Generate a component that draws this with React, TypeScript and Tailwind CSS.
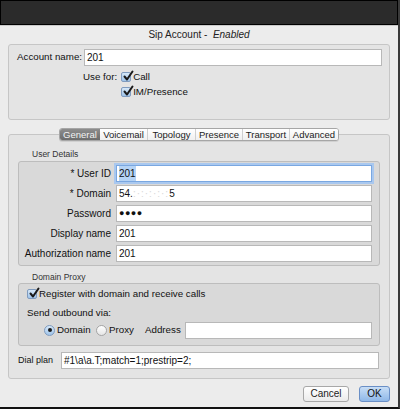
import React from "react";

const font = { fontFamily: '"Liberation Sans", Arial, sans-serif' };

function Check({ label }: { label: string }) {
  return (
    <div className="flex items-center gap-[2px]">
      <span className="relative w-[10px] h-[10px] rounded-[2px] border border-[#7f9bbf] bg-gradient-to-b from-[#d6e8f8] to-[#9fc4ea] shrink-0">
        <svg viewBox="0 0 12 12" className="absolute -top-[3px] left-[0px] w-[12px] h-[12px]">
          <path d="M2.5 6.5 L5 9.5 L10.5 1.5" fill="none" stroke="#1a1a1a" strokeWidth="2" strokeLinecap="round" strokeLinejoin="round" />
        </svg>
      </span>
      <span>{label}</span>
    </div>
  );
}

function Radio({ label, on, className = "" }: { label: string; on?: boolean; className?: string }) {
  return (
    <div className={`flex items-center gap-[2px] shrink-0 ${className}`}>
      <span
        className={`w-[11px] h-[11px] rounded-full border flex items-center justify-center shrink-0 ${
          on ? "border-[#7f9bbf] bg-gradient-to-b from-[#d6e8f8] to-[#9fc4ea]" : "border-[#a5a5a5] bg-gradient-to-b from-white to-[#e6e6e6]"
        }`}
      >
        {on && <span className="w-[4px] h-[4px] rounded-full bg-[#1a1a1a]" />}
      </span>
      <span>{label}</span>
    </div>
  );
}

function Field({
  children,
  focus,
  className = "",
}: {
  children?: React.ReactNode;
  focus?: boolean;
  className?: string;
}) {
  return (
    <div
      className={`h-[17px] bg-white border flex items-center px-[2px] text-[10px] text-[#111] whitespace-nowrap ${
        focus ? "border-[#7aa7e0] shadow-[0_0_0_2px_#a9c8ef]" : "border-[#b8b8b8]"
      } ${className}`}
    >
      {children}
    </div>
  );
}

const TABS: { name: string; w: string }[] = [
  { name: "General", w: "w-[40px]" },
  { name: "Voicemail", w: "w-[47px]" },
  { name: "Topology", w: "w-[48px]" },
  { name: "Presence", w: "w-[47px]" },
  { name: "Transport", w: "w-[47px]" },
  { name: "Advanced", w: "w-[49px]" },
];

const USER_ROWS: { label: string; value: React.ReactNode; focus?: boolean }[] = [
  { label: "* User ID", value: <span className="bg-[#b5d3f5]">201</span>, focus: true },
  {
    label: "* Domain",
    value: (
      <>
        54.<span className="text-[#d8d8d8] tracking-[1px]">:·:·:·:·:</span>5
      </>
    ),
  },
  { label: "Password", value: <span className="text-[9px] tracking-[0.5px]">●●●●</span> },
  { label: "Display name", value: "201" },
  { label: "Authorization name", value: "201" },
];

export default function App() {
  return (
    <div
      className="w-[400px] h-[409px] bg-[#ececec] flex flex-col text-[9.75px] text-[#111] border-r-2 border-r-[#3a3a3a] border-b-2 border-b-[#111] overflow-hidden"
      style={font}
    >
      {/* title bar area */}
      <div className="h-[25px] bg-[#2b2b2b] border border-black shrink-0" />
      <div className="h-[1px] bg-[#c9c9c9] shrink-0" />

      <div className="text-center text-[10px] text-[#222] mt-[2px] h-[14px] leading-[14px]">
        Sip Account -&nbsp; <i>Enabled</i>
      </div>

      {/* account box */}
      <div className="mx-[8px] mt-[2px] h-[76px] rounded-[3px] border border-[#c6c6c6] bg-[#e4e4e4] pl-[8px] pr-[7px] pt-[4px] shrink-0">
        <div className="flex items-center">
          <span className="w-[67px]">Account name:</span>
          <Field className="flex-1 h-[17px]">201</Field>
        </div>
        <div className="flex mt-[4px] ml-[66px] gap-[4px]">
          <span className="leading-[14px]">Use for:</span>
          <div className="flex flex-col gap-[1px] leading-[14px]">
            <Check label="Call" />
            <Check label="IM/Presence" />
          </div>
        </div>
      </div>

      {/* tabs box */}
      <div className="mx-[8px] mt-[14px] h-[245px] rounded-[3px] border border-[#c6c6c6] bg-[#e4e4e4] flex flex-col shrink-0">
        <div className="flex justify-center -mt-[7px]">
          <div className="flex h-[13px] rounded-[3px] border border-[#a6a6a6] bg-white text-[9.5px] leading-[11px] shadow-[0_1px_0_#d0d0d0] overflow-hidden">
            {TABS.map((t, i) => (
              <div
                key={t.name}
                className={`${t.w} text-center ${
                  i === 0
                    ? "bg-gradient-to-b from-[#8d8d8d] to-[#6c6c6c] text-[#f2f2f2]"
                    : "bg-gradient-to-b from-white to-[#f0f0f0] text-[#222]"
                } ${i > 1 ? "border-l border-[#cfcfcf]" : ""}`}
              >
                {t.name}
              </div>
            ))}
          </div>
        </div>

        <div className="px-[9px] mt-[7px]">
          <div className="text-[8.5px] text-[#333] ml-[14px] leading-[12px]">User Details</div>
          <div className="mt-[1px] rounded-[3px] border border-[#bdbdbd] bg-[#d9d9d9] pt-[2px] pb-[2px] pr-[7px] flex flex-col gap-[1px]">
            {USER_ROWS.map((r) => (
              <div key={r.label} className="flex items-center h-[19px]">
                <span className="w-[97px] text-right pr-[5px] text-[10px]">{r.label}</span>
                <Field focus={r.focus} className="flex-1">
                  {r.value}
                </Field>
              </div>
            ))}
          </div>

          <div className="text-[8.5px] text-[#333] ml-[14px] mt-[5px] leading-[12px]">Domain Proxy</div>
          <div className="rounded-[3px] border border-[#bdbdbd] bg-[#d9d9d9] h-[63px] pl-[8px] pr-[7px] pt-[4px] flex flex-col">
            <div className="h-[12px] flex items-center">
              <Check label="Register with domain and receive calls" />
            </div>
            <div className="mt-[7px] h-[12px] leading-[12px]">Send outbound via:</div>
            <div className="flex items-center mt-[3px] h-[16px]">
              <Radio label="Domain" on className="ml-[17px] w-[52px]" />
              <Radio label="Proxy" className="w-[49px]" />
              <span className="w-[40px] shrink-0">Address</span>
              <Field className="flex-1 h-[15px]" />
            </div>
          </div>

          <div className="flex items-center mt-[6px]">
            <span className="w-[43px] text-[9px]">Dial plan</span>
            <Field className="flex-1 h-[15px] mr-[1px]">#1\a\a.T;match=1;prestrip=2;</Field>
          </div>
        </div>
      </div>

      {/* buttons */}
      <div className="flex justify-end gap-[10px] mr-[8px] mt-[7px]">
        <button className="w-[46px] h-[16px] rounded-[3px] border border-[#a8a8a8] bg-gradient-to-b from-white to-[#ebebeb] text-[10px] leading-[14px] text-[#222]">
          Cancel
        </button>
        <button className="w-[31px] h-[16px] rounded-[3px] border border-[#6a8fc6] bg-gradient-to-b from-[#c8def6] to-[#8fb8e8] text-[10px] leading-[14px] text-[#111]">
          OK
        </button>
      </div>
    </div>
  );
}
